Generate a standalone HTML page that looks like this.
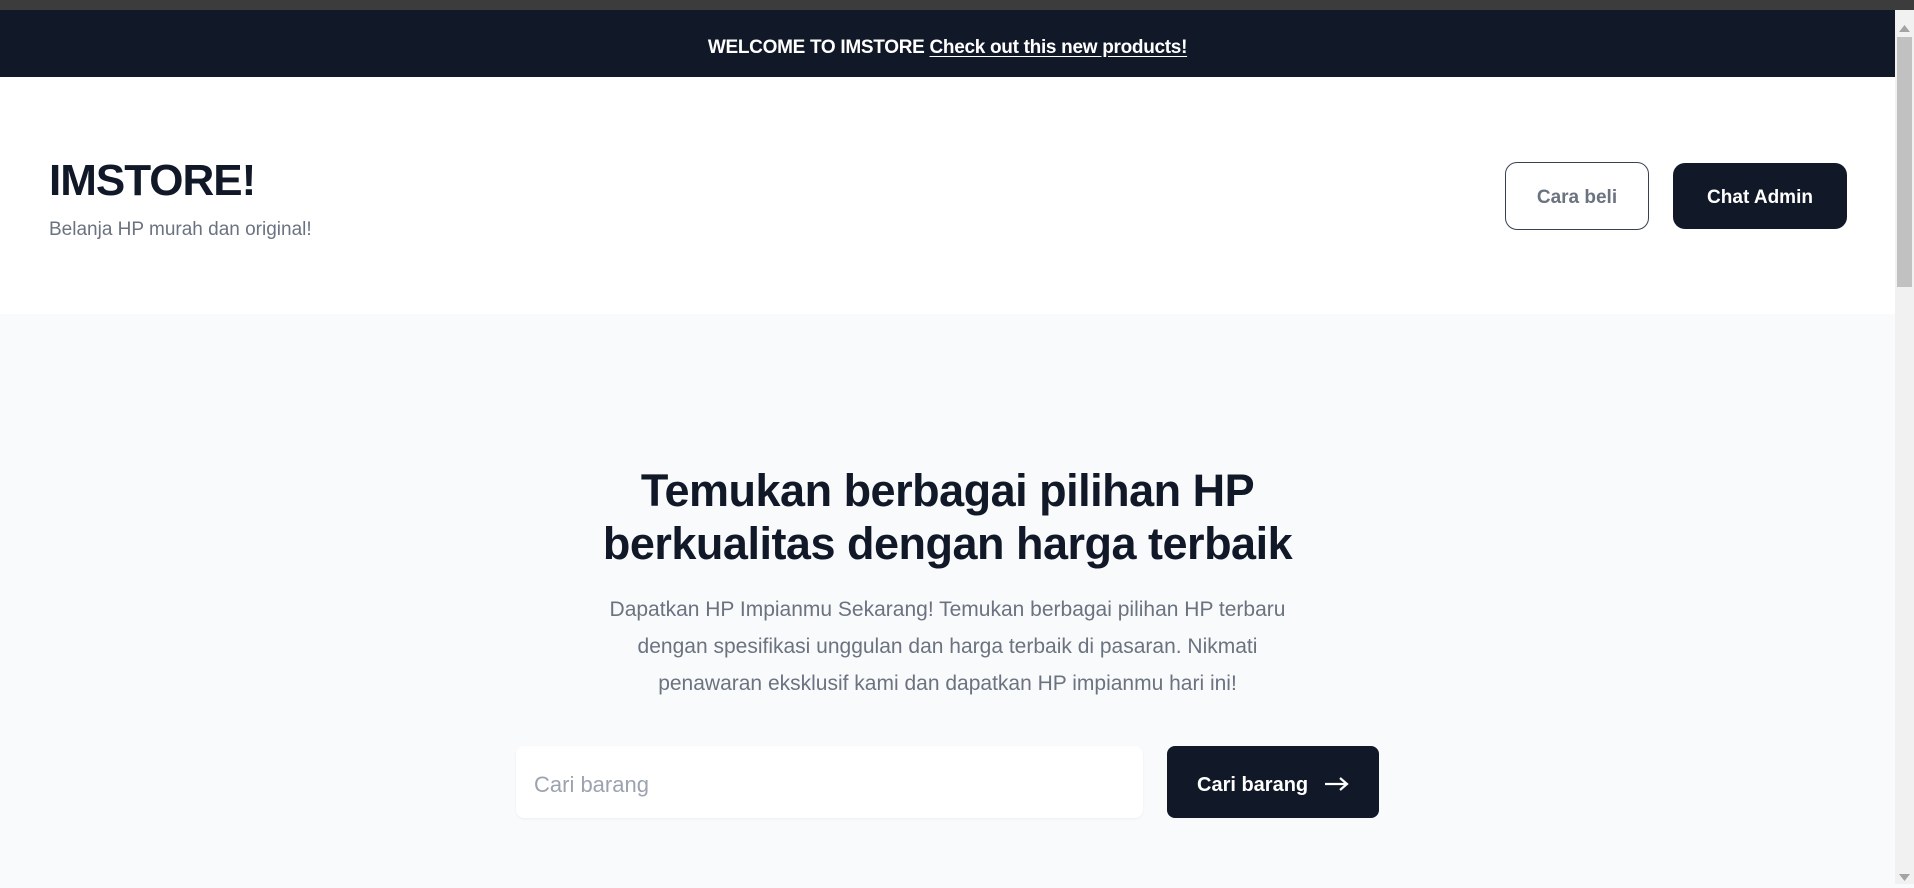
<!DOCTYPE html>
<html><head><meta charset="utf-8"><style>
*{box-sizing:border-box;margin:0;padding:0}
html,body{width:1914px;height:884px;overflow:hidden;font-family:"Liberation Sans",sans-serif;background:#f9fafb}
.chrome{position:absolute;left:0;top:0;width:1914px;height:10px;background:#3c3c3c}
.banner{position:absolute;left:0;top:10px;width:1895px;height:67px;background:#111827;color:#fff;font-size:19px;font-weight:bold;text-align:center;line-height:75px;letter-spacing:-0.3px}
.banner u{text-underline-offset:3px}
.header{position:absolute;left:0;top:77px;width:1895px;height:237px;background:#fff}
.logo{position:absolute;left:49px;top:79px;font-size:44px;font-weight:bold;color:#111827;letter-spacing:-1px}
.sub{position:absolute;left:49px;top:142px;font-size:19px;color:#6b7280}
.btn1{position:absolute;left:1505px;top:85px;width:144px;height:68px;border:1.5px solid #374151;border-radius:12px;color:#6b7280;font-size:19px;font-weight:bold;text-align:center;line-height:69px}
.btn2{position:absolute;left:1673px;top:86px;width:174px;height:66px;background:#111827;border-radius:12px;color:#fff;font-size:19px;font-weight:bold;text-align:center;line-height:70px}
h1{position:absolute;left:0;top:464px;width:1895px;text-align:center;font-size:45px;line-height:53px;color:#111827;font-weight:bold;letter-spacing:-0.5px}
p{position:absolute;left:0;top:591px;width:1895px;text-align:center;font-size:21px;line-height:37px;color:#6b7280}
.inp{position:absolute;left:516px;top:746px;width:627px;height:72px;background:#fff;border-radius:8px;box-shadow:0 1px 2px rgba(0,0,0,.05);font-size:22px;color:#9ca3af;line-height:78px;padding-left:18px}
.btn3{position:absolute;left:1167px;top:746px;width:212px;height:72px;background:#111827;border-radius:8px;color:#fff;font-size:20px;font-weight:bold;line-height:78px;padding-left:30px}
.sb{position:absolute;left:1895px;top:10px;width:19px;height:874px;background:#f1f1f1}
.thumb{position:absolute;left:1897px;top:37px;width:15px;height:250px;background:#c1c1c1}
</style></head><body>
<div class="chrome"></div>
<div class="banner">WELCOME TO IMSTORE <u>Check out this new products!</u></div>
<div class="header">
<div class="logo">IMSTORE!</div>
<div class="sub">Belanja HP murah dan original!</div>
<div class="btn1">Cara beli</div>
<div class="btn2">Chat Admin</div>
</div>
<h1>Temukan berbagai pilihan HP<br>berkualitas dengan harga terbaik</h1>
<p>Dapatkan HP Impianmu Sekarang! Temukan berbagai pilihan HP terbaru<br>dengan spesifikasi unggulan dan harga terbaik di pasaran. Nikmati<br>penawaran eksklusif kami dan dapatkan HP impianmu hari ini!</p>
<div class="inp">Cari barang</div>
<div class="btn3">Cari barang <svg width="26" height="16" viewBox="0 0 26 16" style="vertical-align:-1px;margin-left:10px"><path d="M1 8H23M16 2l7 6-7 6" stroke="#fff" stroke-width="2.2" fill="none"/></svg></div>
<div class="sb"><svg width="19" height="20" style="position:absolute;top:8px"><path d="M4 14h11L9.5 7z" fill="#a3a3a3"/></svg><svg width="19" height="20" style="position:absolute;top:858px"><path d="M4 6h11L9.5 13z" fill="#a3a3a3"/></svg></div>
<div class="thumb"></div>
</body></html>
